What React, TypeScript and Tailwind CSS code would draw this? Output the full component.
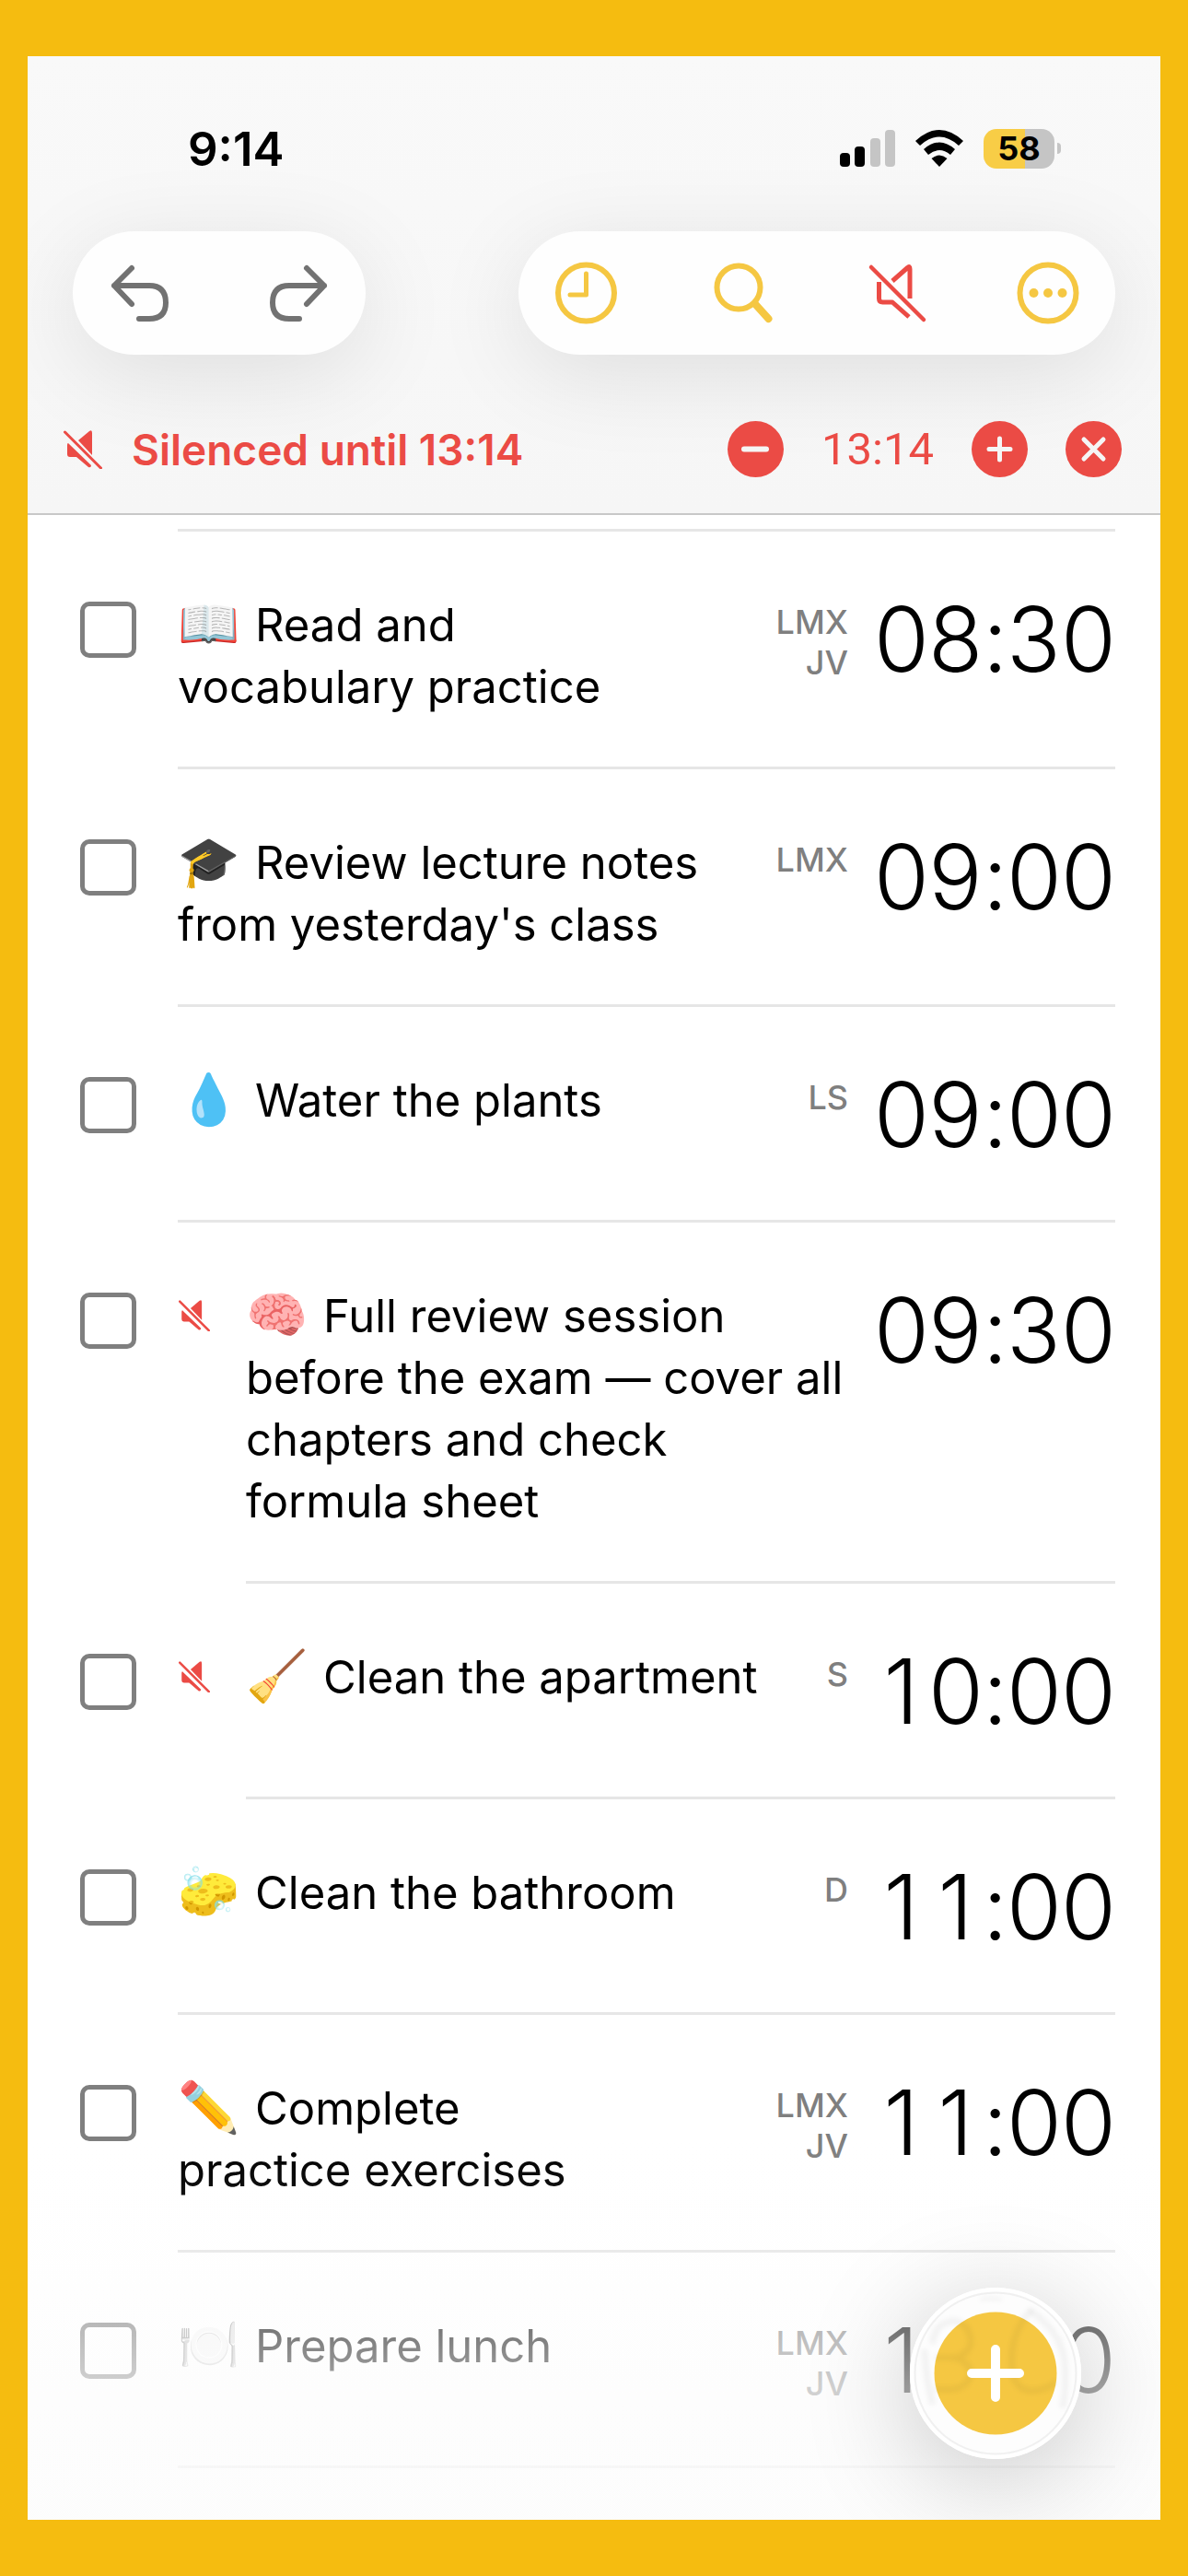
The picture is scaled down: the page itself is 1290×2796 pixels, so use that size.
import React, { useState } from "react";

interface Task {
  emoji: string;
  lines: string[];
  days: string[];
  time: string;
  muted?: boolean;
}

const tasks: Task[] = [
  { emoji: "📖", lines: ["Read and", "vocabulary practice"], days: ["LMX", "JV"], time: "08:30" },
  { emoji: "🎓", lines: ["Review lecture notes", "from yesterday's class"], days: ["LMX"], time: "09:00" },
  { emoji: "💧", lines: ["Water the plants"], days: ["LS"], time: "09:00" },
  {
    emoji: "🧠",
    lines: ["Full review session", "before the exam — cover all", "chapters and check", "formula sheet"],
    days: [],
    time: "09:30",
    muted: true,
  },
  { emoji: "🧹", lines: ["Clean the apartment"], days: ["S"], time: "10:00", muted: true },
  { emoji: "🧽", lines: ["Clean the bathroom"], days: ["D"], time: "11:00" },
  { emoji: "✏️", lines: ["Complete", "practice exercises"], days: ["LMX", "JV"], time: "11:00" },
  { emoji: "🍽️", lines: ["Prepare lunch"], days: ["LMX", "JV"], time: "13:00" },
];

const MutedIcon = ({ className }: { className: string }) => (
  <svg viewBox="0 0 42 42" className={className} fill="currentColor" aria-hidden="true">
    <path d="M16 11 L28 1 Q31 -1 31 3 V27 Z" />
    <path d="M5 14 Q4 14 4 16 V26 Q4 29 7 29 H14 L27 40 Q30 41 30 38 Z" />
    <path d="M1.5 2 L40.5 41" stroke="currentColor" strokeWidth="3" strokeLinecap="round" />
  </svg>
);

const StatusBar = () => (
  <div className="flex h-[140px] items-center justify-between pt-[60px] pr-[108px] pl-[174px]">
    <span className="text-[51px] leading-none font-semibold">9:14</span>
    <div className="flex items-center gap-[22px]">
      <svg viewBox="0 0 60 40" className="h-10 w-[60px]" aria-hidden="true">
        <rect x="0" y="25" width="11" height="15" rx="4" />
        <rect x="16" y="18" width="11" height="22" rx="4" />
        <rect x="33" y="9" width="11" height="31" rx="4" fill="#c5c5c5" />
        <rect x="49" y="0" width="11" height="40" rx="4" fill="#c5c5c5" />
      </svg>
      <svg viewBox="0 0 52 40" className="h-10 w-[52px]" aria-hidden="true">
        <path d="M0 12 Q26 -12 52 12 L47 17 Q26 -2 5 17 Z" />
        <path d="M9 21 Q26 6 43 21 L38 27 Q26 17 14 27 Z" />
        <path d="M17.5 31 Q26 24 34.5 31 L26 40 Z" />
      </svg>
      <div className="flex items-center gap-[3px]">
        <div className="flex h-[43px] w-[77px] items-center justify-center rounded-[14px] bg-linear-to-r from-[#f8cd46] from-58% to-[#c5c5c5] to-58% text-[36px] leading-none font-bold">
          58
        </div>
        <div className="h-3 w-1 rounded-r-full bg-[#c5c5c5]" />
      </div>
    </div>
  </div>
);

const toolClass = "size-[68px] cursor-pointer";
const pillClass =
  "flex h-[134px] items-center justify-between rounded-full bg-[#fefefe] px-[39px] shadow-[0_20px_100px_rgba(0,0,0,0.1)]";

const Toolbar = () => (
  <div className="mt-[50px] flex justify-between pr-[49px] pl-[49px]">
    <div className={`${pillClass} w-[318px]`}>
      <button type="button" aria-label="Undo" className={`${toolClass} text-[#727272]`}>
        <svg viewBox="0 0 68 68" fill="none" stroke="currentColor" strokeWidth="6" strokeLinecap="round" strokeLinejoin="round">
          <path d="M25 7 L6 26 L25 46 M6 26 H44 Q62 26 62 44.5 Q62 62 44 62 H33" />
        </svg>
      </button>
      <button type="button" aria-label="Redo" className={`${toolClass} text-[#727272]`}>
        <svg viewBox="0 0 68 68" fill="none" stroke="currentColor" strokeWidth="6" strokeLinecap="round" strokeLinejoin="round">
          <path d="M43 7 L62 26 L43 46 M62 26 H24 Q6 26 6 44.5 Q6 62 24 62 H35" />
        </svg>
      </button>
    </div>
    <div className={`${pillClass} w-[648px] text-[#f5c742]`}>
      <button type="button" aria-label="History" className={toolClass}>
        <svg viewBox="0 0 68 68" fill="none" stroke="currentColor" strokeLinecap="round" strokeLinejoin="round">
          <circle cx="34.5" cy="34" r="30.5" strokeWidth="6" />
          <path d="M34.5 13 V36 H17" strokeWidth="5" />
        </svg>
      </button>
      <button type="button" aria-label="Search" className={toolClass}>
        <svg viewBox="0 0 68 68" fill="none" stroke="currentColor" strokeLinecap="round" className="overflow-visible">
          <circle cx="33" cy="28" r="23.5" strokeWidth="6" />
          <path d="M51 46 L65.5 62" strokeWidth="8" />
        </svg>
      </button>
      <button type="button" aria-label="Silence" className={`${toolClass} text-[#eb4b45]`}>
        <svg viewBox="0 0 68 68" fill="none" stroke="currentColor" strokeWidth="5" strokeLinejoin="round" className="overflow-visible">
          <path d="M9 6 L66 63" strokeWidth="4.5" strokeLinecap="round" />
          <path d="M32 21 L48.5 6.5 Q51 4 51 8 V40" />
          <path d="M17.5 22 V40 Q17.5 44 21.5 44 H32 L50 60" />
        </svg>
      </button>
      <button type="button" aria-label="More" className={toolClass}>
        <svg viewBox="0 0 68 68" fill="currentColor">
          <circle cx="34" cy="34" r="30.5" fill="none" stroke="currentColor" strokeWidth="6" />
          <circle cx="18.5" cy="34" r="5" />
          <circle cx="34" cy="34" r="5" />
          <circle cx="49.5" cy="34" r="5" />
        </svg>
      </button>
    </div>
  </div>
);

const roundClass = "size-[61px] cursor-pointer rounded-full bg-[#eb4b45] text-[#f5f5f5]";

const SilenceBar = () => (
  <div className="mt-[33px] flex h-[139px] items-center pr-[42px] pl-[39px] text-[#eb4b45]">
    <MutedIcon className="size-[42px]" />
    <span className="ml-[32px] text-[46px] leading-none font-semibold">Silenced until 13:14</span>
    <div className="ml-auto flex items-center gap-[41px]">
      <button type="button" aria-label="Earlier" className={roundClass}>
        <svg viewBox="0 0 61 61" stroke="currentColor" strokeWidth="6" strokeLinecap="round">
          <path d="M18 30.5 H42" />
        </svg>
      </button>
      <span className="font-[Roboto,sans-serif] text-[49px] leading-none">13:14</span>
      <button type="button" aria-label="Later" className={roundClass}>
        <svg viewBox="0 0 61 61" stroke="currentColor" strokeWidth="5" strokeLinecap="round">
          <path d="M19 30.5 H42 M30.5 19 V42" />
        </svg>
      </button>
      <button type="button" aria-label="Turn off silence" className={roundClass}>
        <svg viewBox="0 0 61 61" stroke="currentColor" strokeWidth="5" strokeLinecap="round">
          <path d="M20 20 L41 41 M41 20 L20 41" />
        </svg>
      </button>
    </div>
  </div>
);

// Digits sit in equal cells so the times line up from row to row
const Time = ({ value }: { value: string }) => (
  <time className="w-[290px] text-right text-[97px] leading-[98px] font-light whitespace-nowrap">
    {value.split("").map((char, i) => (
      <span key={i} className={`inline-block text-center ${char === ":" ? "w-[26px]" : "w-[59px]"}`}>
        {char}
      </span>
    ))}
  </time>
);

const TaskRow = ({ task, id }: { task: Task; id: string }) => {
  const [done, setDone] = useState(false);

  return (
    <li className="flex pl-[57px]">
      <input
        id={id}
        type="checkbox"
        checked={done}
        onChange={() => setDone(!done)}
        className="mt-[76px] size-[61px] shrink-0 appearance-none rounded-[10px] border-[5px] border-[#7f7f7f] bg-white checked:bg-[#f5c742]"
      />
      {task.muted && <MutedIcon className="mt-[84px] ml-[46px] size-[34px] shrink-0 text-[#eb4b45]" />}
      <div
        className={`flex min-h-[234px] flex-1 border-b-[3px] border-[#e6e6e6] pt-[68px] pb-[53px] ${
          task.muted ? "ml-[39px]" : "ml-[45px]"
        }`}
      >
        <label htmlFor={id} className="flex-1 text-[49px] leading-[67px] whitespace-nowrap">
          {task.lines.map((line, i) => (
            <span key={line} className="block">
              {i === 0 && <span className="mr-[18px] inline-block w-[66px] text-[54px] leading-none">{task.emoji}</span>}
              {line}
            </span>
          ))}
        </label>
        <div className="pt-2 text-right text-[36px] leading-[44px] font-medium text-[#7f7f7f]">
          {task.days.map((d) => (
            <div key={d}>{d}</div>
          ))}
        </div>
        <Time value={task.time} />
      </div>
    </li>
  );
};

const AddButton = () => (
  <button
    type="button"
    aria-label="Add task"
    className="absolute right-[86px] bottom-[66px] size-[186px] cursor-pointer rounded-full bg-[#fdfdfd] shadow-[0_20px_120px_rgba(0,0,0,0.22)]"
  >
    <svg viewBox="0 0 186 186" fill="none">
      <defs>
        <filter id="soft" x="-20%" y="-20%" width="140%" height="140%">
          <feGaussianBlur stdDeviation="2.5" />
        </filter>
      </defs>
      <circle cx="93" cy="93" r="91" stroke="#fff" strokeWidth="4" />
      <circle cx="93" cy="93" r="87.5" stroke="#f0f0f0" strokeWidth="2" />
      <circle cx="93" cy="93" r="66.5" fill="#f5c742" />
      <g filter="url(#soft)" stroke="#000" strokeOpacity="0.045" strokeWidth="7" strokeLinecap="round">
        <path d="M25 58 Q28 38 48 36 Q67 40 66 62 Q60 76 46 76 M30 76 H46 Q66 80 66 94 Q62 114 30 110" />
        <path d="M130 26 Q108 52 111 86 Q112 112 134 112 Q150 110 156 104" />
        <path d="M132 26 Q164 48 168 80 Q170 110 166 128" />
        <path d="M78 13 Q88 10 98 13" strokeWidth="4" />
        <path d="M16 70 Q18 100 24 124" />
      </g>
      <path d="M93 67 V119 M67 93 H119" stroke="#fff" strokeWidth="10" strokeLinecap="round" />
    </svg>
  </button>
);

const App: React.FC = () => {
  return (
    <div className="flex min-h-screen flex-col bg-[#f5bc10] px-[30px] py-[61px] font-[Inter,'Liberation_Sans',sans-serif] text-black">
      <div className="relative flex flex-1 flex-col overflow-hidden bg-white">
        <header className="overflow-hidden border-b-2 border-[#c8c8c8] bg-linear-to-b from-[#f9f9f9] to-[#f6f6f6]">
          <StatusBar />
          <Toolbar />
          <SilenceBar />
        </header>
        <main className="pr-[49px] pt-[15px]">
          <div className="ml-[163px] h-[3px] bg-[#e6e6e6]" />
          <ul>
            {tasks.map((task, i) => (
              <TaskRow key={task.emoji} task={task} id={`task-${i}`} />
            ))}
          </ul>
        </main>
        <div className="pointer-events-none absolute inset-x-0 bottom-0 h-[415px] bg-[linear-gradient(to_bottom,rgba(252,252,252,0)_0%,rgba(252,252,252,0.1)_24%,rgba(252,252,252,0.45)_48%,rgba(252,252,252,0.65)_65%,rgba(252,252,252,0.76)_87%,rgba(252,252,252,0.85)_100%)]" />
        <AddButton />
      </div>
    </div>
  );
};

export default App;
